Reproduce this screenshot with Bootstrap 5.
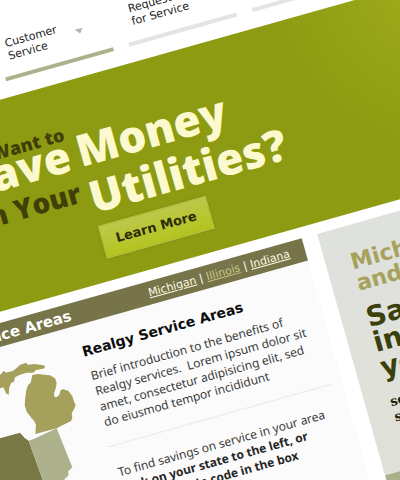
<!DOCTYPE html>
<html lang="en">
<head>
<meta charset="utf-8">
<meta name="viewport" content="width=device-width, initial-scale=1">
<title>Realgy Energy Services</title>
<link href="https://cdn.jsdelivr.net/npm/bootstrap@5.3.0/dist/css/bootstrap.min.css" rel="stylesheet">
<style>
  body { font-family: "Noto Sans", "Open Sans", sans-serif; font-size: 12px; line-height: 16px; color: #3a3a3a; background: #fff; }
  a, button { color: inherit; }
  .verdana { font-family: "DejaVu Sans", sans-serif; }
  /* The page is tilted around the window's top left corner */
  .tilted { --bleed: 144px; margin-left: calc(-1 * var(--bleed)); width: calc(100% + 2 * var(--bleed)); transform: rotate(-15.7deg); transform-origin: var(--bleed) 0; }
  .main-menu { height: 96px; padding: 36px 0 16px; }
  .menu-entry { flex: 0 0 112px; border-bottom: 4px solid #e4e4e4; padding: 1px 24px 0 9px; font-size: 11px; line-height: 13px; color: #222; text-decoration: none; }
  .menu-entry.current { border-color: #adb28c; }
  .caret-down { flex: none; margin-top: 12px; border: 4px solid transparent; border-top: 5px solid #b3b3b3; border-bottom: 0; }
  .hero { height: 204px; background: radial-gradient(circle at 580px 0, #a4b01c, #98a517 80px, #8d9b12 180px); font-family: "Open Sans", "Noto Sans", sans-serif; font-weight: 800; color: #fdf9cf; padding-top: 42px; }
  .hero-lead { flex: 0 0 169px; }
  .hero-dark { color: #403f08; }
  .t-want { font-size: 18px; line-height: 16px; }
  .t-big { font-size: 44px; line-height: 26px; }
  .t-your { font-size: 28px; line-height: 32px; margin-top: 10px; }
  .t-right { font-size: 44px; line-height: 48px; }
  .learn { width: 112px; height: 34px; margin-top: 6px; padding: 0; font-family: "DejaVu Sans", sans-serif; font-size: 13px; font-weight: 700; border: 1px solid #bac647; border-radius: 0; background: linear-gradient(#bdc84c, #b4c41e); color: #2c2d06; box-shadow: 0 0 3px #7c890c; }
  .panels { gap: 16px; padding-top: 11px; }
  .areas { flex: 0 0 370px; background: #fbfbfb; }
  .areas-bar { height: 23px; line-height: 23px; padding: 0 16px 0 0; background: #77744a; color: #fff; }
  .areas-title { flex: 0 0 127px; font-size: 15px; line-height: 25px; font-weight: 700; }
  .state-links { font-size: 11px; }
  .state-links a { color: #fdfbe4; }
  .state-links a.current { color: #c6c783; }
  .state-map { flex: 0 0 128px; }
  .areas-text { padding: 18px 12px 0 0; }
  .areas-text h2 { font-size: 14px; line-height: 18px; font-weight: 700; color: #0c0c0c; margin-bottom: 9px; }
  .intro { padding: 0 0 16px 2px; margin: 0 0 19px; border-bottom: 1px dotted #d8d8d8; }
  .find { padding-left: 2px; }
  .find strong { color: #262626; }
  .promo { flex: 1 1 0; min-width: 0; overflow: hidden; white-space: nowrap; background: linear-gradient(#dfe1dd, #dfe0d6); }
  .promo-body { padding: 26px 0 0 25px; height: 251px; }
  .promo h3 { font-size: 22px; line-height: 22px; font-weight: 700; color: #a6a15c; margin-bottom: 12px; }
  .promo-big { font-size: 28px; line-height: 26px; font-weight: 700; color: #3b3f0b; margin-bottom: 14px; }
  .promo-note { font-family: "DejaVu Serif", serif; font-size: 13px; font-weight: 700; color: #1d1e12; }
  .promo-foot { height: 80px; background: #abb08b; }
</style>
<script src="https://cdn.jsdelivr.net/npm/bootstrap@5.3.0/dist/js/bootstrap.bundle.min.js"></script>
</head>
<body class="vh-100 overflow-hidden">
<div class="tilted">
  <nav class="main-menu verdana d-flex gap-3" aria-label="Main">
    <a href="#" class="menu-entry">About<br>Us</a>
    <a href="#" class="menu-entry current d-flex justify-content-between pe-4">
      <span>Customer<br>Service</span><span class="caret-down"></span>
    </a>
    <a href="#" class="menu-entry">Request<br>for Service</a>
    <a href="#" class="menu-entry">Contact<br>Us</a>
    <a href="#" class="menu-entry">News</a>
  </nav>

  <header class="hero">
    <div class="d-flex gap-2">
      <div class="hero-lead d-flex flex-column align-items-end text-nowrap">
        <div class="t-want hero-dark">Want to</div>
        <div class="t-big">Save</div>
        <div class="t-your hero-dark">On Your</div>
      </div>
      <div class="pt-1">
        <div class="t-right">Money</div>
        <div class="t-right">Utilities?</div>
        <button type="button" class="learn btn">Learn More</button>
      </div>
    </div>
  </header>

  <main class="panels d-flex">
    <section class="areas">
      <div class="areas-bar verdana d-flex justify-content-between">
        <div class="areas-title text-end text-nowrap">Service Areas</div>
        <div class="state-links text-nowrap">
          <a href="#">Michigan</a> | <a href="#" class="current">Illinois</a> | <a href="#">Indiana</a>
        </div>
      </div>
      <div class="d-flex">
        <svg class="state-map" width="128" height="270" viewBox="0 0 128 270" role="img" aria-label="Map of service areas">
          <g transform="translate(144 -334) rotate(15.7) translate(0 350) scale(.3333)">
            <path fill="#a5a05c" d="M-30 90L0 75L12 62L18 68L40 62L60 45L78 38L84 44L105 42L130 46L136 50L130 56L108 60L100 68L80 68L60 74L45 82L42 95L34 98L28 112L26 135L18 130L10 112L0 115L-30 110Z"/>
            <path fill="#a5a05c" d="M97 75L112 72L150 76L165 85L170 98L168 112L162 132L163 140L170 142L178 134L181 122L188 117L205 122L218 140L222 155L227 164L224 174L215 190L217 203L213 213L170 235L106 252L108 225L102 212L95 205L80 185L74 165L76 140L79 120L84 105L92 98Z"/>
            <path fill="#797946" d="M-60 282L60 248L74 264L86 272L150 450L-60 450Z"/>
            <path fill="#adb18c" d="M86 272L106 265L170 235L217 352L204 365L206 375L190 392L180 450L150 450Z"/>
          </g>
        </svg>
        <div class="areas-text flex-grow-1 text-nowrap">
          <h2 class="verdana">Realgy Service Areas</h2>
          <p class="intro">Brief introduction to the benefits of<br>Realgy services.&nbsp; Lorem ipsum dolor sit<br>amet, consectetur adipisicing elit, sed<br>do eiusmod tempor incididunt</p>
          <p class="find">To find savings on service in your area<br><strong>click on your state to the left, or<br>enter your zip code in the box</strong></p>
        </div>
      </div>
    </section>

    <aside class="promo">
      <div class="promo-body verdana">
        <h3>Michigan<br>and Illinois</h3>
        <div class="promo-big">Save<br>in<br>your</div>
        <div class="promo-note">sed do eiusmod<br>sit amet</div>
      </div>
      <div class="promo-foot"></div>
    </aside>
  </main>
</div>
</body>
</html>
